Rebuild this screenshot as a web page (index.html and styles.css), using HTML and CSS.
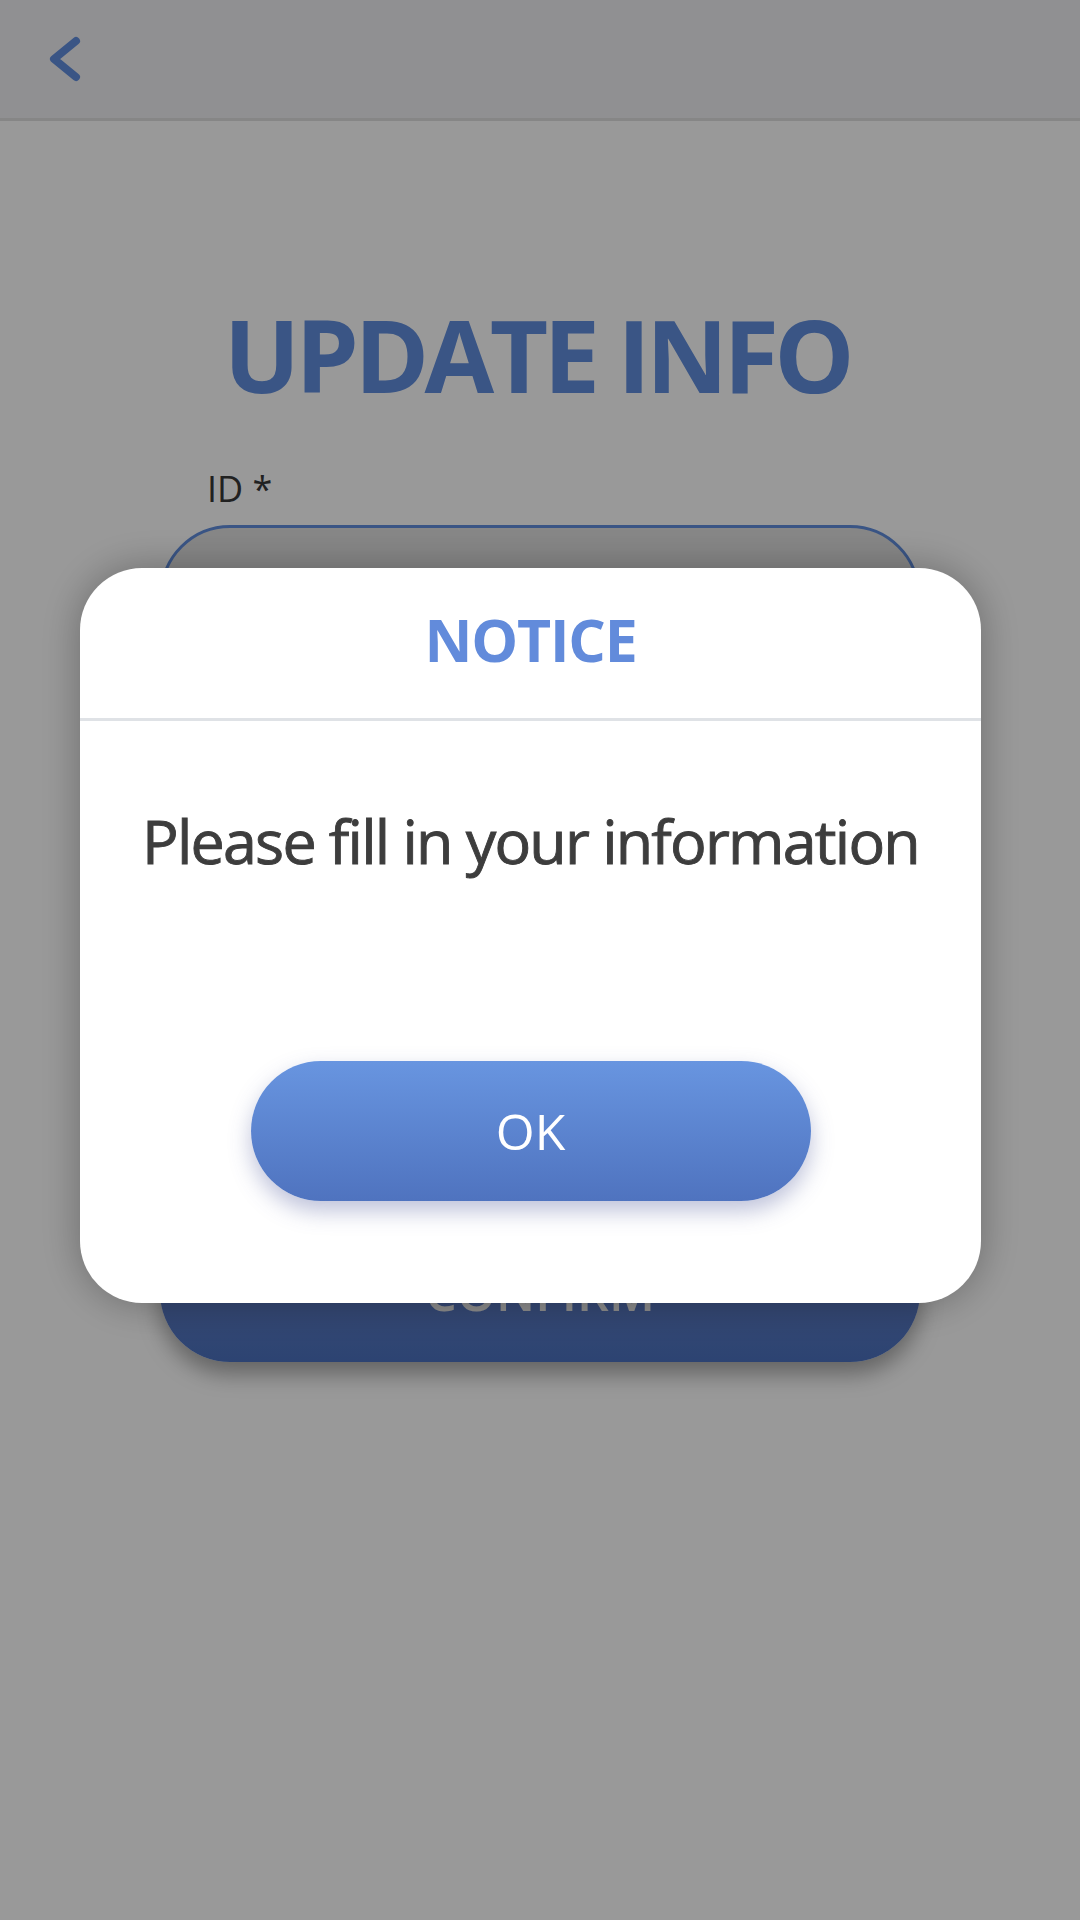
FILE: index.html
```html
<!DOCTYPE html>
<html lang="en">
<head>
<meta charset="utf-8">
<title>Update Info</title>
<link rel="stylesheet" href="styles.css">
</head>
<body>
<div class="app">
  <header class="topbar">
    <button class="back" aria-label="Back">
      <svg width="48" height="48" viewBox="0 0 48 48"><path d="M35 6 L13 24 L35 42" fill="none" stroke="#618ede" stroke-width="8" stroke-linecap="round" stroke-linejoin="round"/></svg>
    </button>
  </header>
  <main class="form">
    <h1 class="title">UPDATE INFO</h1>
    <label class="field-label">ID *</label>
    <div class="input"></div>
    <button class="confirm">CONFIRM</button>
  </main>
</div>
<div class="overlay">
  <div class="dialog">
    <div class="dialog-head">NOTICE</div>
    <div class="dialog-body">
      <p class="message">Please fill in your information</p>
      <button class="ok">OK</button>
    </div>
  </div>
</div>
</body>
</html>
```
FILE: styles.css
```css
* { box-sizing: border-box; }
html, body { margin: 0; padding: 0; }
body {
  width: 1080px;
  height: 1920px;
  background: #ffffff;
  font-family: "Open Sans", "Noto Sans", sans-serif;
  overflow: hidden;
}
.app { width: 1080px; min-height: 1920px; background: #ffffff; }
.topbar {
  height: 121px;
  background: #f0f0f3;
  border-bottom: 3px solid #e0e0e0;
  display: flex;
  align-items: flex-start;
  padding: 35px 0 0 41px;
}
.back {
  border: 0; background: none; padding: 0; margin: 0;
  width: 48px; height: 48px; display: block;
}
.back svg { display: block; }
.form {
  display: flex;
  flex-direction: column;
  align-items: center;
}
.title {
  margin: 173px 6px 0 0;
  font-size: 101px;
  line-height: 121px;
  font-weight: 700;
  color: #618ede;
  letter-spacing: -4.6px;
}
.field-label {
  align-self: flex-start;
  margin: 49px 0 0 207px;
  font-size: 36px;
  line-height: 49px;
  color: #383838;
}
.input {
  margin-top: 12px;
  width: 760px;
  height: 140px;
  border: 3px solid #618ede;
  border-radius: 70px;
  background: #e1e1e1;
}
.confirm {
  margin-top: 557px;
  width: 760px;
  height: 140px;
  border: 0;
  border-radius: 70px;
  background: linear-gradient(#6c82c2, #4b71bf);
  color: #e8e8e8;
  font-family: "Open Sans", "Noto Sans", sans-serif;
  font-size: 50px;
  font-weight: 600;
  box-shadow: 0 12px 22px rgba(0,0,0,0.35);
}
.overlay {
  position: fixed;
  inset: 0;
  background: rgba(0,0,0,0.4);
  padding: 568px 99px 0 80px;
}
.dialog {
  width: 901px;
  height: 735px;
  background: #ffffff;
  border-radius: 62px;
  box-shadow: 0 0 40px rgba(0,0,0,0.3);
  overflow: hidden;
}
.dialog-head {
  height: 153px;
  border-bottom: 3px solid #dfe2e6;
  display: flex;
  align-items: center;
  justify-content: center;
  padding-bottom: 8px;
  font-size: 59px;
  font-weight: 700;
  color: #628bdb;
  letter-spacing: -1.2px;
}
.dialog-body {
  display: flex;
  flex-direction: column;
  align-items: center;
  padding-top: 80px;
}
.message {
  margin: 0;
  font-size: 61px;
  line-height: 80px;
  font-weight: 400;
  color: #3d3d3d;
  letter-spacing: -1.8px;
  -webkit-text-stroke: 0.9px #3d3d3d;
}
.ok {
  margin-top: 180px;
  width: 560px;
  height: 140px;
  border: 0;
  border-radius: 70px;
  background: linear-gradient(#6895e0, #4f73bf);
  color: #ffffff;
  font-family: "Open Sans", "Noto Sans", sans-serif;
  font-size: 50px;
  font-weight: 500;
  box-shadow: 0 10px 22px rgba(70,80,150,0.35);
}
```
